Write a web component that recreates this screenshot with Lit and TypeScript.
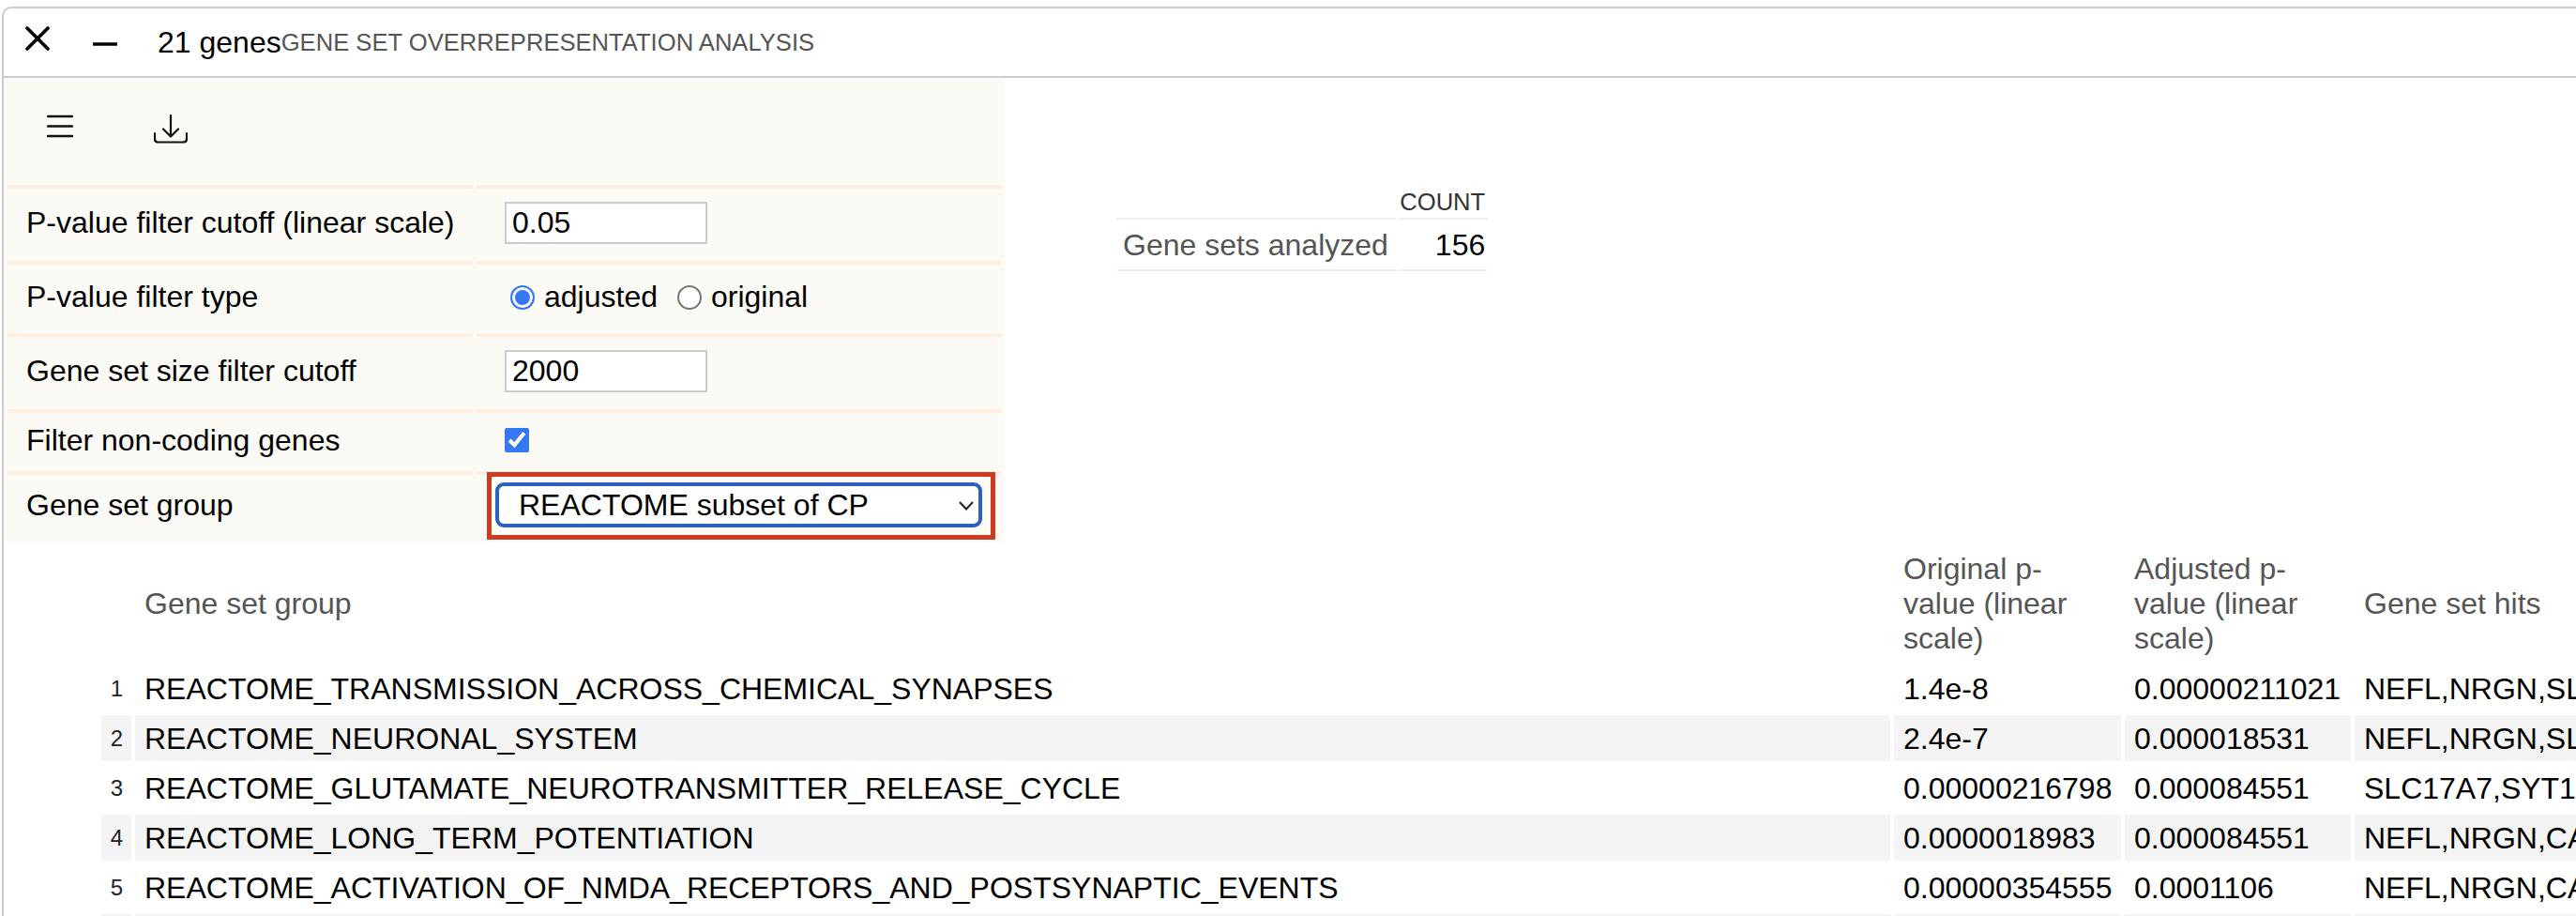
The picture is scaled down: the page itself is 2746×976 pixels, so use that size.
import { LitElement, html, css } from "lit";
import { customElement } from "lit/decorators.js";

const ROWS = [
  ["REACTOME_TRANSMISSION_ACROSS_CHEMICAL_SYNAPSES", "1.4e-8", "0.00000211021", "NEFL,NRGN,SLC17A7"],
  ["REACTOME_NEURONAL_SYSTEM", "2.4e-7", "0.000018531", "NEFL,NRGN,SLC17A7"],
  ["REACTOME_GLUTAMATE_NEUROTRANSMITTER_RELEASE_CYCLE", "0.00000216798", "0.000084551", "SLC17A7,SYT1"],
  ["REACTOME_LONG_TERM_POTENTIATION", "0.0000018983", "0.000084551", "NEFL,NRGN,CAMK2A"],
  ["REACTOME_ACTIVATION_OF_NMDA_RECEPTORS_AND_POSTSYNAPTIC_EVENTS", "0.00000354555", "0.0001106", "NEFL,NRGN,CAMK2A"],
  ["", "", "", ""],
];

@customElement("app-root")
export class AppRoot extends LitElement {
  static styles = css`
    :host { display: block; position: relative; width: 2746px; height: 976px; overflow: hidden; background: #fff; font-family: "Liberation Sans", Arial, sans-serif; color: #000; font-size: 32px; }
    .card { margin: 7px 0 0 2px; padding-top: 0; border-left: 2px solid #ccc; border-top: 2px solid #ccc; border-top-left-radius: 10px; width: 2760px; height: 980px; }
    .header { height: 72px; display: flex; align-items: center; border-bottom: 2px solid #ccc; }
    .hicon { display: block; flex: none; }
    .x { margin-left: 23px; margin-top: -9px; }
    .minus { margin-left: 46px; margin-top: 3px; }
    .count { margin-left: 43px; line-height: 36px; }
    .title { font-size: 25.6px; color: #555; }
    .top { display: flex; align-items: flex-start; margin-top: 1px; height: 494px; }
    .panel { width: 1067px; height: 494px; background: #fcfaf5; flex: none; }
    .tools { height: 113px; display: flex; align-items: center; }
    .menu { margin-left: 46px; margin-top: -12px; }
    .dl { margin-left: 86px; margin-top: -7px; }
    table.form { border-collapse: separate; border-spacing: 4px 0; width: 1067px; }
    table.form td { box-sizing: border-box; border-top: 4px solid #fdeee0; padding: 0 0 4px 0; font-size: 32px; }
    table.form td.l { width: 496px; padding-left: 20px; }
    table.form td.v { padding-left: 30px; }
    table.form td.vs { padding-left: 20px; }
    .h81 td { height: 81px; }
    .h77 td { height: 77px; }
    .h66 td { height: 66px; }
    .h72 td { height: 72px; }
    input.txt { width: 216px; height: 45px; box-sizing: border-box; border: 2px solid #ccc; background: #fff; font: 32px "Liberation Sans", Arial, sans-serif; padding: 0 6px; display: block; outline: none; margin: 0; color: #000; border-radius: 0; }
    .radios { display: flex; align-items: center; margin-left: 6px; }
    .radios input { appearance: none; box-sizing: border-box; width: 26px; height: 26px; margin: 0 10px 0 0; border-radius: 50%; border: 2px solid #767676; background: #fff; flex: none; }
    .radios input:checked { border: 2.5px solid #3478f6; background: #3478f6; box-shadow: inset 0 0 0 3px #fff; }
    .radios label + input { margin-left: 21px; }
    .check { width: 26px; height: 26px; margin: 0; display: block; accent-color: #3478f6; }
    .sel { position: relative; width: 519px; height: 48px; }
    .sel select { appearance: none; width: 100%; height: 100%; box-sizing: border-box; border: 4px solid #2b5fc4; border-radius: 9px; background: #fff; font: 32px "Liberation Sans", Arial, sans-serif; color: #000; padding: 0 0 0 21px; outline: none; margin: 0; display: block; }
    .chev { position: absolute; right: 9px; top: 20px; pointer-events: none; }
    .redbox { position: absolute; box-sizing: border-box; left: 519px; top: 503px; width: 542px; height: 72px; border: 5px solid #d03a20; }
    .stats { margin: 116px 0 0 120px; border-collapse: separate; border-spacing: 0; }
    .stats th { font-size: 25.6px; font-weight: 400; color: #333; text-align: right; padding: 0 2px 2px 0; line-height: 30px; border-bottom: 2px solid #eee; }
    .stats th.blank { border-right: 4px solid #fff; }
    .stats td { border-bottom: 2px solid #eee; line-height: 36px; padding: 9px 2px 8px 6px; }
    .stats td.n { color: #555; padding-right: 7px; border-right: 4px solid #fff; }
    .stats td.c { text-align: right; padding-left: 39px; }
    table.data { border-collapse: separate; border-spacing: 4px; table-layout: fixed; margin: 0 0 0 100px; width: 2810px; }
    col.ci { width: 32px; }
    col.cn { width: 1871px; }
    col.co { width: 242px; }
    col.ca { width: 241px; }
    col.ch { width: 400px; }
    table.data th { font-weight: 400; color: #555; text-align: left; line-height: 37px; padding: 0 10px; height: 123px; box-sizing: border-box; vertical-align: middle; white-space: normal; }
    table.data td { height: 49px; box-sizing: border-box; padding: 0 10px; white-space: nowrap; overflow: hidden; line-height: 36px; }
    table.data td.i { font-size: 24px; text-align: right; padding: 0 9px 0 0; color: #222; }
    table.data tbody tr:nth-child(even) td { background: #f4f4f4; }
  `;

  render() {
    return html`
      <div class="card">
        <div class="header">
          <svg class="hicon x" width="26" height="26" viewBox="0 0 26 26"><path d="M2 2 L24 24 M24 2 L2 24" stroke="#000" stroke-width="3.6" stroke-linecap="round" fill="none"/></svg>
          <svg class="hicon minus" width="26" height="4" viewBox="0 0 26 4"><path d="M1 2 H25" stroke="#000" stroke-width="3.4" stroke-linecap="round"/></svg>
          <span class="count">21 genes</span><span class="title">GENE SET OVERREPRESENTATION ANALYSIS</span>
        </div>
        <div class="top">
          <div class="panel">
            <div class="tools">
              <svg class="hicon menu" width="28" height="25" viewBox="0 0 28 25"><path d="M1 2 H27 M1 12.5 H27 M1 23 H27" stroke="#111" stroke-width="2.4" stroke-linecap="round" fill="none"/></svg>
              <svg class="hicon dl" width="36" height="31" viewBox="0 0 36 31"><path d="M18 1 V23 M10 15.5 L18 23.5 L26 15.5 M1 20 V26 Q1 29.5 4.5 29.5 H31.5 Q35 29.5 35 26 V20" stroke="#111" stroke-width="2.2" stroke-linecap="round" stroke-linejoin="round" fill="none"/></svg>
            </div>
            <table class="form">
              <tr class="h81"><td class="l">P-value filter cutoff (linear scale)</td><td class="v"><input class="txt" .value=${"0.05"} /></td></tr>
              <tr class="h77"><td class="l">P-value filter type</td><td class="v"><div class="radios"><input type="radio" name="t" checked /><label>adjusted</label><input type="radio" name="t" /><label>original</label></div></td></tr>
              <tr class="h81"><td class="l">Gene set size filter cutoff</td><td class="v"><input class="txt" .value=${"2000"} /></td></tr>
              <tr class="h66"><td class="l">Filter non-coding genes</td><td class="v"><input class="check" type="checkbox" checked /></td></tr>
              <tr class="h72"><td class="l">Gene set group</td><td class="vs"><div class="sel"><select><option>REACTOME subset of CP</option></select><svg class="chev" width="16" height="10" viewBox="0 0 16 10"><path d="M1 1 L8 8.5 L15 1" stroke="#222" stroke-width="2" fill="none"/></svg></div></td></tr>
            </table>
          </div>
          <table class="stats">
            <tr><th class="blank"></th><th>COUNT</th></tr>
            <tr><td class="n">Gene sets analyzed</td><td class="c">156</td></tr>
          </table>
        </div>
        <table class="data">
          <colgroup><col class="ci" /><col class="cn" /><col class="co" /><col class="ca" /><col class="ch" /></colgroup>
          <thead><tr><th></th><th>Gene set group</th><th>Original p-value (linear scale)</th><th>Adjusted p-value (linear scale)</th><th>Gene set hits</th></tr></thead>
          <tbody>
            ${ROWS.map((r, i) => html`<tr><td class="i">${i + 1}</td><td>${r[0]}</td><td>${r[1]}</td><td>${r[2]}</td><td>${r[3]}</td></tr>`)}
          </tbody>
        </table>
      </div>
      <div class="redbox"></div>
    `;
  }
}
